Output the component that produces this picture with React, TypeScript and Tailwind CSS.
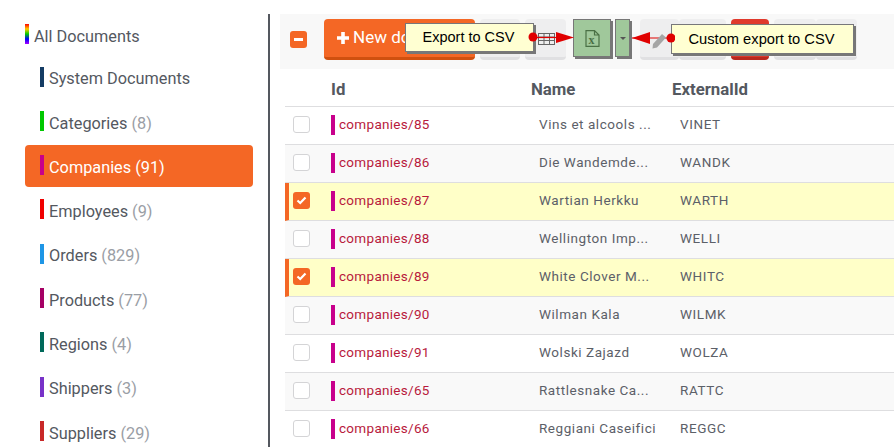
const FONT = "font-['Roboto',sans-serif]";

type Doc = { id: string; name: string; ext: string; checked?: boolean };

const SIDEBAR = [
  { label: 'Categories', count: 8, color: 'bg-[#00c800]' },
  { label: 'Companies', count: 91, color: 'bg-[#c8008c]', active: true },
  { label: 'Employees', count: 9, color: 'bg-[#f00000]' },
  { label: 'Orders', count: 829, color: 'bg-[#1e96e6]' },
  { label: 'Products', count: 77, color: 'bg-[#a50064]' },
  { label: 'Regions', count: 4, color: 'bg-[#00695a]' },
  { label: 'Shippers', count: 3, color: 'bg-[#7832c8]' },
  { label: 'Suppliers', count: 29, color: 'bg-[#c82828]' },
];

const DOCS: Doc[] = [
  { id: 'companies/85', name: 'Vins et alcools ...', ext: 'VINET' },
  { id: 'companies/86', name: 'Die Wandemde...', ext: 'WANDK' },
  { id: 'companies/87', name: 'Wartian Herkku', ext: 'WARTH', checked: true },
  { id: 'companies/88', name: 'Wellington Imp...', ext: 'WELLI' },
  { id: 'companies/89', name: 'White Clover M...', ext: 'WHITC', checked: true },
  { id: 'companies/90', name: 'Wilman Kala', ext: 'WILMK' },
  { id: 'companies/91', name: 'Wolski Zajazd', ext: 'WOLZA' },
  { id: 'companies/65', name: 'Rattlesnake Ca...', ext: 'RATTC' },
  { id: 'companies/66', name: 'Reggiani Caseifici', ext: 'REGGC' },
];

function SideItem({ label, count, color, active }: { label: string; count?: number; color: string; active?: boolean }) {
  return (
    <div className={`flex h-[42px] items-center rounded pl-[15px] pt-1 ${active ? 'bg-[#f46725] text-white' : 'text-[#54585f]'}`}>
      <span className={`mb-[6px] mr-[5px] h-5 w-1 ${color}`} />
      <span className="text-[16.3px]">
        {label}
        {count !== undefined && <span className={active ? 'text-white' : 'text-[#9a9ea5]'}> ({count})</span>}
      </span>
    </div>
  );
}

function Row({ doc, odd }: { doc: Doc; odd: boolean }) {
  const bg = doc.checked ? 'border-l-4 border-l-[#f46725] bg-[#ffffc8] pl-1' : odd ? 'bg-[#f9f9f9] pl-2' : 'bg-white pl-2';
  return (
    <div className={`flex h-[38px] items-center border-b border-[#dedee0] pb-[2px] ${bg}`}>
      {doc.checked ? (
        <span className="flex h-[17px] w-[17px] items-center justify-center rounded-[3px] bg-[#f46725]">
          <svg width="11" height="9" viewBox="0 0 11 9"><path d="M1.5 4.5 4.2 7 9.5 1.5" fill="none" stroke="#fff" strokeWidth="2.2" /></svg>
        </span>
      ) : (
        <span className="h-[17px] w-[17px] rounded-[3px] border border-[#d4d4d6] bg-white" />
      )}
      <span className="ml-[21px] h-5 w-1 bg-[#c8008c]" />
      <span className="ml-1 w-[200px] text-[13.5px] tracking-[0.3px] text-[#b81a3c]">{doc.id}</span>
      <span className="w-[141px] text-[13.5px] tracking-[0.55px] whitespace-nowrap text-[#5c6068]">{doc.name}</span>
      <span className="text-[13.5px] tracking-[0.6px] text-[#5c6068]">{doc.ext}</span>
    </div>
  );
}

function Tool({ className = '' }: { className?: string }) {
  return <span className={`h-[41px] rounded border-b-[3px] border-[#e0e0e2] bg-[#eeeeef] ${className}`} />;
}

function Callout({ text, className }: { text: string; className: string }) {
  return (
    <div className={`absolute flex items-center justify-center border border-[#77777a] bg-[#ffffd2] pr-[2px] font-['Liberation_Sans',sans-serif] text-black shadow-[2px_2px_0_#777] ${className}`}>
      {text}
    </div>
  );
}

export default function App() {
  return (
    <div className={`${FONT} relative flex h-[447px] w-[894px] overflow-hidden bg-white`}>
      <aside className="mt-[14px] h-[433px] w-[270px] shrink-0 border-r-2 border-[#54585f] pl-[25px] pr-[15px]">
        <div className="flex h-[44px] items-center pt-[2px] text-[16.3px] text-[#54585f]">
          <span className="mb-[6px] mr-[5px] h-5 w-1 bg-[linear-gradient(to_bottom,#f00,#fc0,#0c0,#00f,#a0f)]" />
          All Documents
        </div>
        <div className="-mt-[1.5px] flex flex-col gap-[2.3px]">
          <SideItem label="System Documents" color="bg-[#143c64]" />
          {SIDEBAR.map((item) => <SideItem key={item.label} {...item} />)}
        </div>
      </aside>

      <main className="mt-[14px] min-w-0 flex-1 pl-[10px]">
        <div className="flex h-[55px] items-center bg-[#f8f8f8] pb-1 pl-[10px]">
          <span className="flex h-[17px] w-[17px] items-center justify-center rounded-[3px] bg-[#f46725]">
            <span className="h-[2.5px] w-[9px] bg-white" />
          </span>
          <div className="ml-[17px] flex h-[41px] w-[151px] items-center rounded border-b-[3px] border-[#d0500f] bg-[#f46725] pl-[13px] text-[17px] text-white">
            <svg className="mr-1" width="12" height="12" viewBox="0 0 12 12"><path d="M6 0v12M0 6h12" stroke="#fff" strokeWidth="3.6" /></svg>
            New doc
          </div>
          <Tool className="ml-[5px] w-10" />
          <Tool className="ml-[5px] w-[41px]" />
          <div className="mb-[3px] ml-[7px] flex h-[38px] w-[38px] items-center justify-center border border-[#777] bg-[#a0c89b] shadow-[2px_2px_0_#777]">
            <svg width="15" height="17" viewBox="0 0 15 17" fill="none" stroke="#4a7045" strokeWidth="1.2">
              <path d="M1 .6h8.5L14 5v11.4H1zM9.5.6V5H14" />
              <text x="3.4" y="14" fontFamily="Liberation Serif, serif" fontWeight="bold" fontSize="12" fill="#4a7045" stroke="none">x</text>
            </svg>
          </div>
          <div className="mb-[3px] ml-1 flex h-[38px] w-[15px] items-center justify-center border border-[#777] bg-[#a0c89b] shadow-[2px_2px_0_#777]">
            <span className="border-x-[3px] border-t-[3px] border-x-transparent border-t-[#555]" />
          </div>
          <Tool className="ml-[10px] w-[39px]" />
          <Tool className="w-[47px]" />
          <span className="ml-[5px] h-[41px] w-[38px] rounded border-b-[3px] border-[#b9281e] bg-[#e0392c]" />
          <Tool className="ml-[5px] w-[42px]" />
          <Tool className="w-[41px]" />
        </div>

        <div className="ml-[5px]">
          <div className="flex h-[38px] items-center border-b border-[#dedee0] pt-1 text-[16.8px] font-bold text-[#54585f]">
            <span className="ml-[46px] w-[200px]">Id</span>
            <span className="w-[141px]">Name</span>
            <span>ExternalId</span>
          </div>
          {DOCS.map((doc, i) => <Row key={doc.id} doc={doc} odd={i % 2 === 1} />)}
        </div>
      </main>

      <Callout text="Export to CSV" className="left-[405px] top-[23px] h-[29px] w-[129px] text-[14.5px]" />
      <Callout text="Custom export to CSV" className="left-[671px] top-[24px] h-[30px] w-[183px] text-[14.7px]" />

      <svg className="pointer-events-none absolute left-[525px] top-[25px]" width="150" height="30" viewBox="0 0 150 30">
        <rect x="13.5" y="8.5" width="16" height="11" fill="#eee" stroke="#666" strokeWidth="1" />
        <path d="M13.5 12h16M13.5 15.5h16M19 8.5v11M24.5 8.5v11" stroke="#666" strokeWidth="1" />
        <path d="M8 12.5H35" stroke="#e00000" strokeWidth="1.2" />
        <circle cx="8" cy="12" r="4.5" fill="#e00000" />
        <path d="M31 7l18 5.5-18 5.5z" fill="#e00000" />
        <path d="M107 13h39" stroke="#e00000" strokeWidth="1.2" />
        <path d="M107 13l18-6v12z" fill="#e00000" />
        <path d="M128 19l9-10 4 3.5-9 10-4.5 1z" fill="#a5a5a5" />
        <circle cx="146" cy="13" r="4.5" fill="#e00000" />
      </svg>
    </div>
  );
}
